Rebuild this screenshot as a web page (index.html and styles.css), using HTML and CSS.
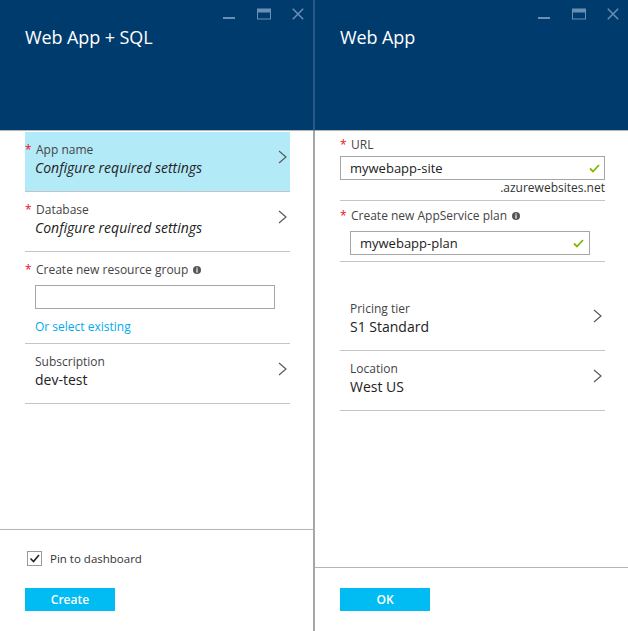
FILE: index.html
```html
<!DOCTYPE html>
<html lang="en">
<head>
<meta charset="utf-8">
<title>Web App + SQL</title>
<link rel="stylesheet" href="styles.css">
</head>
<body>
<div class="app">
  <section class="blade blade-left">
    <header class="blade-head">
      <div class="controls">
        <svg class="ic ic-min" width="12" height="12" viewBox="0 0 12 12"><rect x="0" y="9" width="12" height="2"/></svg>
        <svg class="ic ic-max" width="14" height="12" viewBox="0 0 14 12"><rect x="0.5" y="1.5" width="13" height="9.5" fill="none" stroke-width="1"/><rect x="0" y="1" width="14" height="3"/></svg>
        <svg class="ic ic-close" width="12" height="12" viewBox="0 0 12 12"><path d="M0.8 0.8 L11.2 11.2 M11.2 0.8 L0.8 11.2" fill="none" stroke-width="1.5"/></svg>
      </div>
      <h1 class="blade-title">Web App + SQL</h1>
    </header>
    <div class="blade-body">
      <div class="row nav selected">
        <div class="row-text">
          <div class="label"><span class="req">*</span>App name</div>
          <div class="value italic">Configure required settings</div>
        </div>
        <svg class="chev" width="9" height="14" viewBox="0 0 9 14"><polyline points="1,1 8,7 1,13"/></svg>
      </div>
      <div class="row nav">
        <div class="row-text">
          <div class="label"><span class="req">*</span>Database</div>
          <div class="value italic">Configure required settings</div>
        </div>
        <svg class="chev" width="9" height="14" viewBox="0 0 9 14"><polyline points="1,1 8,7 1,13"/></svg>
      </div>
      <div class="row field rg">
        <div class="label"><span class="req">*</span>Create new resource group <svg class="info" width="8" height="8" viewBox="0 0 8 8"><circle cx="4" cy="4" r="4"/><rect x="3.4" y="1.4" width="1.2" height="1.2" fill="#fff"/><rect x="3.4" y="3.2" width="1.2" height="3.4" fill="#fff"/></svg></div>
        <div class="input"></div>
        <a class="link">Or select existing</a>
      </div>
      <div class="row nav">
        <div class="row-text">
          <div class="label">Subscription</div>
          <div class="value">dev-test</div>
        </div>
        <svg class="chev" width="9" height="14" viewBox="0 0 9 14"><polyline points="1,1 8,7 1,13"/></svg>
      </div>
    </div>
    <footer class="blade-foot foot-left">
      <label class="check">
        <span class="box"><svg width="13" height="13" viewBox="0 0 13 13"><polyline points="2.5,6.5 5.5,9.5 11,3"/></svg></span>
        <span>Pin to dashboard</span>
      </label>
      <button class="btn">Create</button>
    </footer>
  </section>

  <section class="blade blade-right">
    <header class="blade-head">
      <div class="controls">
        <svg class="ic ic-min" width="12" height="12" viewBox="0 0 12 12"><rect x="0" y="9" width="12" height="2"/></svg>
        <svg class="ic ic-max" width="14" height="12" viewBox="0 0 14 12"><rect x="0.5" y="1.5" width="13" height="9.5" fill="none" stroke-width="1"/><rect x="0" y="1" width="14" height="3"/></svg>
        <svg class="ic ic-close" width="12" height="12" viewBox="0 0 12 12"><path d="M0.8 0.8 L11.2 11.2 M11.2 0.8 L0.8 11.2" fill="none" stroke-width="1.5"/></svg>
      </div>
      <h1 class="blade-title">Web App</h1>
    </header>
    <div class="blade-body">
      <div class="row field url">
        <div class="label"><span class="req">*</span>URL</div>
        <div class="input full"><span>mywebapp-site</span><svg class="ok" width="11" height="9" viewBox="0 0 11 9"><polyline points="1,4.5 4,7.5 10,1"/></svg></div>
        <div class="suffix">.azurewebsites.net</div>
      </div>
      <div class="row field plan">
        <div class="label"><span class="req">*</span>Create new AppService plan <svg class="info" width="8" height="8" viewBox="0 0 8 8"><circle cx="4" cy="4" r="4"/><rect x="3.4" y="1.4" width="1.2" height="1.2" fill="#fff"/><rect x="3.4" y="3.2" width="1.2" height="3.4" fill="#fff"/></svg></div>
        <div class="input"><span>mywebapp-plan</span><svg class="ok" width="11" height="9" viewBox="0 0 11 9"><polyline points="1,4.5 4,7.5 10,1"/></svg></div>
      </div>
      <div class="group">
        <div class="row nav">
          <div class="row-text">
            <div class="label">Pricing tier</div>
            <div class="value">S1 Standard</div>
          </div>
          <svg class="chev" width="9" height="14" viewBox="0 0 9 14"><polyline points="1,1 8,7 1,13"/></svg>
        </div>
        <div class="row nav">
          <div class="row-text">
            <div class="label">Location</div>
            <div class="value">West US</div>
          </div>
          <svg class="chev" width="9" height="14" viewBox="0 0 9 14"><polyline points="1,1 8,7 1,13"/></svg>
        </div>
      </div>
    </div>
    <footer class="blade-foot foot-right">
      <button class="btn">OK</button>
    </footer>
  </section>
</div>
</body>
</html>
```

FILE: styles.css
```css
* { box-sizing: border-box; }
html, body { margin: 0; padding: 0; background: #fff; }
body {
  font-family: "Open Sans", "Noto Sans", sans-serif;
  color: #333;
  width: 628px;
  height: 631px;
  overflow: hidden;
}
.app {
  display: flex;
  height: 631px;
}
.blade {
  display: flex;
  flex-direction: column;
  height: 631px;
}
.blade-left { width: 315px; }
.blade-right { width: 313px; }

.blade-head {
  height: 131px;
  background: #003b6e;
  border-bottom: 1px solid #b4b4b4;
  padding: 8px 9px 0 25px;
}
.blade-left .blade-head { border-right: 2px solid #2b5784; }
.controls {
  display: flex;
  justify-content: flex-end;
  align-items: flex-start;
  gap: 21px;
  height: 12px;
}
.ic { fill: #6a8fb6; stroke: #6a8fb6; display: block; }
.ic-min { stroke: none; margin-right: 1px; }
.blade-title {
  margin: 5px 0 0;
  font-size: 18px;
  font-weight: 400;
  line-height: 24px;
  letter-spacing: -0.1px;
  color: #fff;
}

.blade-body {
  flex: 1;
  padding: 1px 23px 0 25px;
}
.blade-left .blade-body,
.blade-left .blade-foot { border-right: 2px solid #a6a6a6; }

.row {
  border-bottom: 1px solid #c4c4c4;
}
.row.nav {
  display: flex;
  align-items: center;
  padding: 10px 3px 13px 10px;
}
.row.nav.selected { background: #b3eaf8; }
.row-text { flex: 1; }
.chev {
  fill: none;
  stroke: #5a5a5a;
  stroke-width: 1.2;
  margin-top: -6px;
}
.label {
  font-size: 12px;
  line-height: 16px;
  color: #444;
}
.req {
  display: inline-block;
  width: 11px;
  margin-left: -10px;
  color: #e81123;
  font-size: 12px;
}
.info { fill: #555; vertical-align: 0; margin-left: 2px; }
.value {
  font-size: 14px;
  line-height: 20px;
  color: #222;
}
.value.italic { font-style: italic; }

.row.field { padding-left: 10px; }
.rg { padding: 10px 0 8px 10px; }
.input {
  width: 240px;
  height: 24px;
  border: 1px solid #a6a6a6;
  margin-top: 7px;
  display: flex;
  align-items: center;
  justify-content: space-between;
  padding: 0 5px 0 9px;
  font-size: 13px;
  color: #222;
}
.link {
  display: block;
  margin-top: 10px;
  font-size: 12px;
  line-height: 16px;
  color: #00abec;
}
.url { padding: 5px 0 4px 10px; }
.url .input.full {
  width: auto;
  margin: 3px 0 0 -10px;
  padding-right: 4px;
}
.suffix {
  text-align: right;
  font-size: 12px;
  line-height: 16px;
  color: #333;
}
.plan { padding: 7px 0 6px 10px; }
.ok { fill: none; stroke: #7fba00; stroke-width: 1.8; }
.group { margin-top: 29px; }

.blade-foot {
  border-top: 1px solid #b4b4b4;
  padding: 20px 0 20px 25px;
}
.foot-left { padding-top: 21px; }
.check {
  display: flex;
  align-items: center;
  gap: 8px;
  font-size: 11.5px;
  color: #333;
  margin-left: 2px;
  height: 15px;
}
.box {
  width: 15px;
  height: 15px;
  border: 1px solid #999;
  display: flex;
  align-items: center;
  justify-content: center;
}
.box svg { fill: none; stroke: #222; stroke-width: 1.6; }
.btn {
  display: block;
  width: 90px;
  height: 23px;
  border: 0;
  background: #00bcf2;
  color: #fff;
  font-family: "Open Sans", "Noto Sans", sans-serif;
  font-weight: 600;
  font-size: 12px;
  padding: 0;
}
.foot-left .btn { margin-top: 22px; }
```
